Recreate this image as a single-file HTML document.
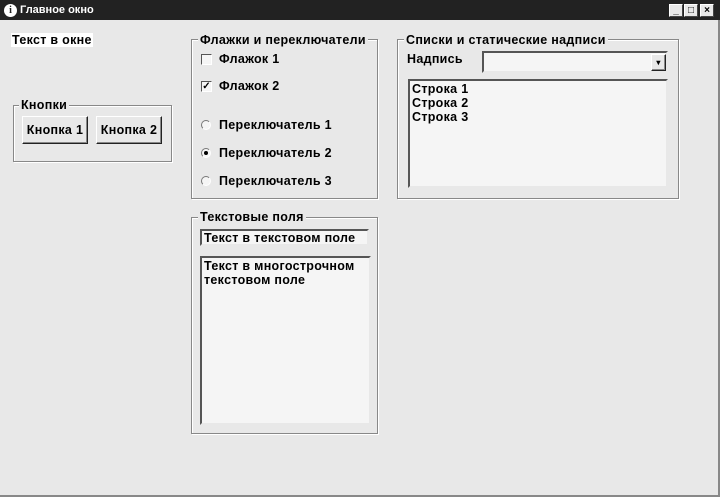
<!DOCTYPE html>
<html><head><meta charset="utf-8"><style>
*{margin:0;padding:0;box-sizing:border-box}
body{width:720px;height:497px;background:#e8e8e8;position:relative;overflow:hidden;font-family:"Liberation Sans",sans-serif;font-weight:bold;font-size:12px;color:#000}
.a{position:absolute;white-space:nowrap}
.title{left:0;top:0;width:720px;height:20px;background:#222;color:#fff;font-size:11px;line-height:21px;padding-left:20px}
.gb{position:absolute;border:1px solid #888;box-shadow:1px 1px 0 #fff, inset 1px 1px 0 #fff}
.lbl{position:absolute;background:#e8e8e8;padding:0 2px;line-height:14px;font-size:12.5px;letter-spacing:0.3px}
.btn{position:absolute;background:#e8e8e8;border:1px solid;border-color:#fff #222 #222 #fff;box-shadow:inset -1px -1px 0 #888;text-align:center;line-height:26px;font-size:12.5px;letter-spacing:0.3px}
.edit{position:absolute;background:#f5f5f5;border:2px solid;border-color:#555 #e8e8e8 #e8e8e8 #555;padding:1px 2px;font-size:12.5px;line-height:14px;letter-spacing:0.3px}
.cb{position:absolute;width:11px;height:11px;border:1px solid;border-color:#555 #fff #fff #555;background:#f5f5f5;font-size:10px;line-height:9px;text-align:center}
.rb{position:absolute;width:10px;height:10px;border-radius:50%;border:1px solid;border-color:#777 #fff #fff #777;background:#f5f5f5}
.t{position:absolute;font-size:12.5px;line-height:14px;letter-spacing:0.3px;white-space:nowrap}
.wb{position:absolute;top:4px;width:14px;height:13px;background:#e8e8e8;border:1px solid;border-color:#fff #444 #444 #fff;font-size:10px;line-height:11px;text-align:center;color:#000}
</style></head><body>
<div class="a title">Главное окно</div>
<div class="a" style="left:4px;top:4px;width:13px;height:13px;border-radius:50%;background:#fff;color:#222;font-size:10px;line-height:13px;text-align:center;font-family:'Liberation Serif',serif">i</div>
<div class="wb" style="left:669px">_</div>
<div class="wb" style="left:684px">□</div>
<div class="wb" style="left:700px">×</div>
<div class="a" style="left:718px;top:20px;width:2px;height:477px;background:#888"></div>
<div class="a" style="left:0;top:495px;width:720px;height:2px;background:#888"></div>

<div class="t" style="left:11px;top:33px;background:#fff;padding:0 1px">Текст в окне</div>

<div class="gb" style="left:13px;top:105px;width:159px;height:57px"></div>
<div class="lbl" style="left:19px;top:98px">Кнопки</div>
<div class="btn" style="left:22px;top:116px;width:66px;height:28px">Кнопка 1</div>
<div class="btn" style="left:96px;top:116px;width:66px;height:28px">Кнопка 2</div>

<div class="gb" style="left:191px;top:39px;width:187px;height:160px"></div>
<div class="lbl" style="left:198px;top:33px">Флажки и переключатели</div>
<div class="cb" style="left:201px;top:54px"></div><div class="t" style="left:219px;top:52px">Флажок 1</div>
<div class="cb" style="left:201px;top:81px">✓</div><div class="t" style="left:219px;top:79px">Флажок 2</div>
<div class="rb" style="left:201px;top:120px"></div><div class="t" style="left:219px;top:118px">Переключатель 1</div>
<div class="rb" style="left:201px;top:148px"><div style="width:4px;height:4px;background:#000;border-radius:50%;margin:2px"></div></div><div class="t" style="left:219px;top:146px">Переключатель 2</div>
<div class="rb" style="left:201px;top:176px"></div><div class="t" style="left:219px;top:174px">Переключатель 3</div>

<div class="gb" style="left:397px;top:39px;width:282px;height:160px"></div>
<div class="lbl" style="left:404px;top:33px">Списки и статические надписи</div>
<div class="t" style="left:407px;top:52px">Надпись</div>
<div class="edit" style="left:482px;top:51px;width:186px;height:22px"></div>
<div class="btn" style="left:651px;top:54px;width:15px;height:17px;line-height:15px;font-size:8px">▾</div>
<div class="edit" style="left:408px;top:79px;width:260px;height:109px">Строка 1<br>Строка 2<br>Строка 3</div>

<div class="gb" style="left:191px;top:217px;width:187px;height:217px"></div>
<div class="lbl" style="left:198px;top:210px">Текстовые поля</div>
<div class="edit" style="left:200px;top:229px;width:169px;height:17px;padding-top:0">Текст в текстовом поле</div>
<div class="edit" style="left:200px;top:256px;width:171px;height:169px">Текст в многострочном<br>текстовом поле</div>
</body></html>
